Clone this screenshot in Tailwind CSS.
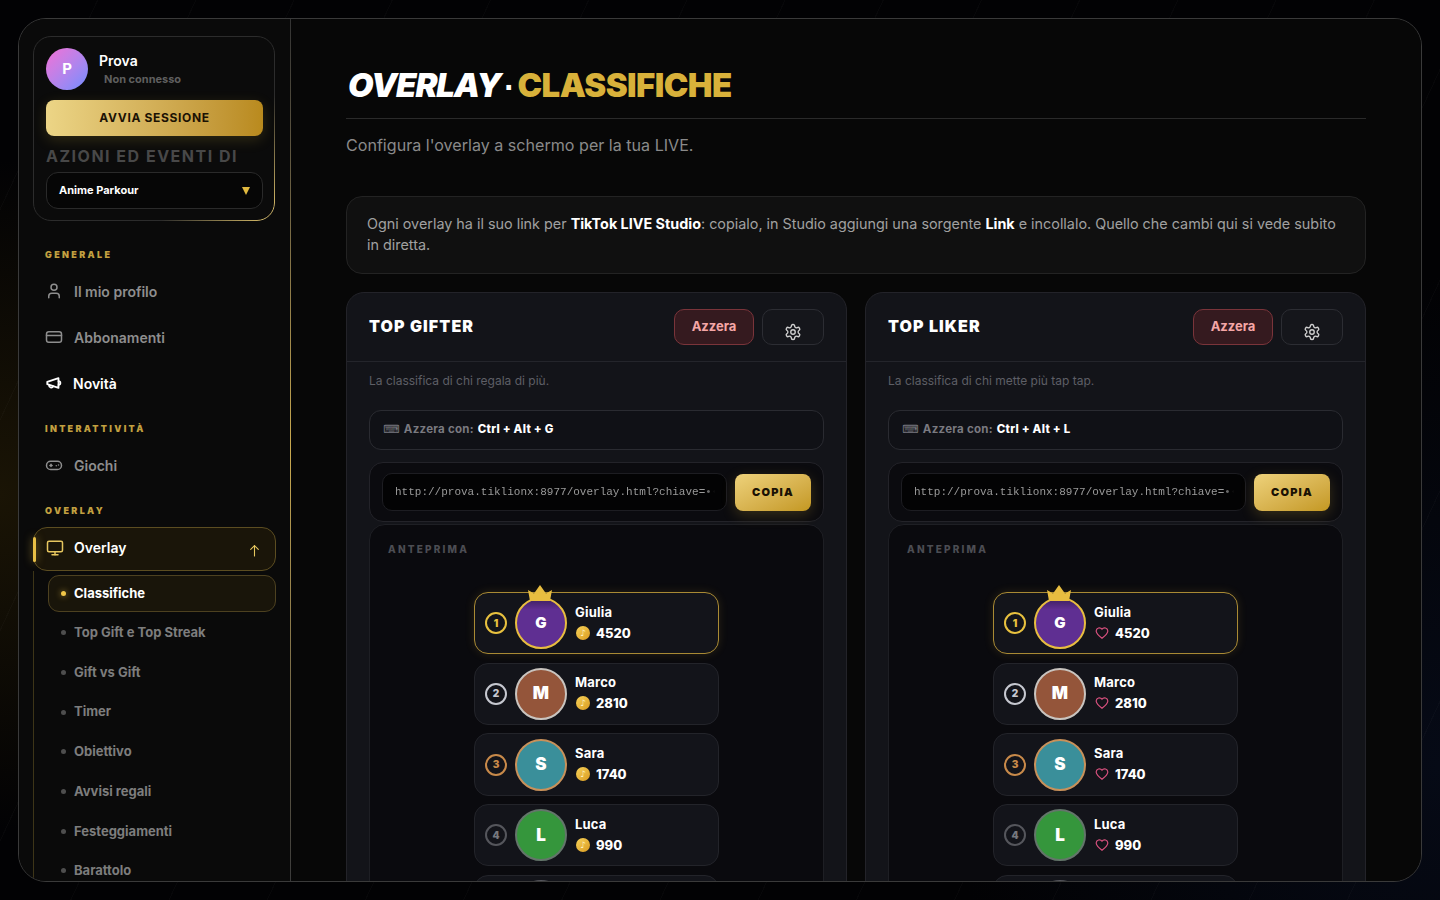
<!DOCTYPE html>
<html lang="it">
  <head>
    <meta charset="UTF-8" />
    <meta name="viewport" content="width=device-width, initial-scale=1.0" />
    <title>Overlay - Classifiche</title>
    <script src="https://cdn.jsdelivr.net/npm/@tailwindcss/browser@4"></script>
  </head>
  <body class="h-screen overflow-hidden bg-[#020204] p-[18px] font-['Inter',sans-serif] text-white bg-[repeating-linear-gradient(115deg,transparent_0_88px,rgba(255,255,255,0.018)_88px_89px),radial-gradient(circle_at_0%_55%,#1a1405_0%,transparent_22%),radial-gradient(circle_at_100%_85%,#060a16_0%,transparent_30%)]">
    <div class="flex h-[864px] w-[1404px] overflow-hidden rounded-[28px] border border-[#3a3a3a] bg-[#080808]">
      <!-- Sidebar -->
      <aside class="relative h-full w-[272px] shrink-0 overflow-hidden bg-[#0a0a0a] pl-[14px] pr-[15px] pt-[17px]">
        <div class="absolute right-0 top-0 h-full w-px bg-gradient-to-b from-[#333] via-[#c9a94f] to-[#3a3a3a]"></div>

        <!-- Account card -->
        <div class="relative h-[185px] w-[242px] rounded-[18px] border border-[#2c2c2c] bg-[#0b0b0b] px-3 pt-[11px]">
          <div class="pointer-events-none absolute -inset-px rounded-[18px] border border-[#d9bd68] [mask-image:linear-gradient(132deg,transparent_72%,black_98%)]"></div>
          <div class="flex h-[42px] items-start gap-[11px]">
            <div class="flex h-[42px] w-[42px] items-center justify-center rounded-full bg-gradient-to-br from-[#f26fd6] to-[#6d8cff] text-[15px] font-bold">P</div>
            <div>
              <div class="mt-[3px] text-[14px] leading-[20px] font-semibold">Prova</div>
              <div class="ml-[5px] mt-[1px] text-[11px] leading-[14px] font-bold text-[#5f5f5f]">Non connesso</div>
            </div>
          </div>
          <button class="mt-[10px] h-[36px] w-[217px] rounded-[8px] bg-gradient-to-r from-[#ecd586] to-[#b98a1d] text-[12px] font-bold tracking-[0.65px] text-[#1c1204] shadow-[0_4px_14px_rgba(212,175,55,0.18)]">AVVIA SESSIONE</button>
          <div class="mt-[10px] whitespace-nowrap text-[16px] leading-[20px] font-bold tracking-[1.5px] text-[#484848]">AZIONI ED EVENTI DI</div>
          <div class="mt-[6px] flex h-[37px] w-[217px] items-center justify-between rounded-[12px] border border-[#2a2a2a] bg-[#060606] pl-3 pr-[12px]">
            <span class="text-[11px] font-bold">Anime Parkour</span>
            <svg class="h-[8px] w-[8px]" viewBox="0 0 8 8" fill="#e0b93f"><path d="M0 0h8L4 8z"/></svg>
          </div>
        </div>

        <!-- Generale -->
        <div class="mt-[28px] pl-3 text-[9px] leading-[12px] font-black tracking-[2.35px] text-[#c2a040]">GENERALE</div>
        <a class="mt-[7px] flex h-[46px] items-center gap-[11px] pl-[12px] text-[14px] font-semibold text-[#8e8e8e]">
          <svg class="h-[18px] w-[18px]" viewBox="0 0 24 24" fill="none" stroke="currentColor" stroke-width="2" stroke-linecap="round" stroke-linejoin="round"><path d="M19 21v-2a4 4 0 0 0-4-4H9a4 4 0 0 0-4 4v2"/><circle cx="12" cy="7" r="4"/></svg>
          Il mio profilo
        </a>
        <a class="flex h-[46px] items-center gap-[11px] pl-[12px] text-[14px] font-semibold text-[#8e8e8e]">
          <svg class="h-[18px] w-[18px]" viewBox="0 0 24 24" fill="none" stroke="currentColor" stroke-width="2" stroke-linecap="round" stroke-linejoin="round"><rect x="2" y="5" width="20" height="14" rx="3"/><path d="M2 10h20"/></svg>
          Abbonamenti
        </a>
        <a class="flex h-[46px] items-center gap-[10px] pl-[12px] text-[14px] font-semibold text-white">
          <svg class="h-[18px] w-[18px]" viewBox="0 0 24 24" fill="none" stroke="currentColor" stroke-width="2.4" stroke-linecap="round" stroke-linejoin="round"><path d="M3 10.5v3l15 5V5.5z"/><path d="M11 16.5a3 3 0 0 1-5.6-1.8"/><path d="M18 9.5a2.5 2.5 0 0 1 0 5"/></svg>
          Novità
        </a>

        <!-- Interattivita -->
        <div class="mt-[17px] pl-3 text-[9px] leading-[12px] font-black tracking-[2.3px] text-[#c2a040]">INTERATTIVITÀ</div>
        <a class="mt-[7px] flex h-[46px] items-center gap-[11px] pl-[12px] text-[14px] font-semibold text-[#8e8e8e]">
          <svg class="h-[18px] w-[18px]" viewBox="0 0 24 24" fill="none" stroke="currentColor" stroke-width="2" stroke-linecap="round" stroke-linejoin="round"><rect x="2" y="7" width="20" height="11" rx="5.5"/><path d="M6.5 12.5h3"/><path d="M8 11v3"/><path d="M15 13h.01"/><path d="M18 12h.01"/></svg>
          Giochi
        </a>

        <!-- Overlay -->
        <div class="mt-[17px] pl-3 text-[9px] leading-[12px] font-black tracking-[2.35px] text-[#c2a040]">OVERLAY</div>
        <div class="relative mt-[10px] flex h-[44px] w-[243px] items-center gap-[10px] rounded-[14px] border border-[#5c4d21] bg-[#1a1509] pb-[3px] pl-[12px] text-[14px] font-semibold text-white">
          <span class="absolute -left-px top-[9px] h-[25px] w-[3px] rounded-full bg-[#e8bf45] shadow-[0_0_8px_rgba(232,191,69,0.6)]"></span>
          <svg class="h-[18px] w-[18px] text-[#e6c65f]" viewBox="0 0 24 24" fill="none" stroke="currentColor" stroke-width="2" stroke-linecap="round" stroke-linejoin="round"><rect x="2" y="3" width="20" height="14" rx="2"/><path d="M8 21h8"/><path d="M12 17v4"/></svg>
          Overlay
          <svg class="absolute right-[14px] top-[16px] h-[13px] w-[13px] text-[#e6c65f]" viewBox="0 0 24 24" fill="none" stroke="currentColor" stroke-width="2" stroke-linecap="round" stroke-linejoin="round"><path d="M12 22V3"/><path d="m5 10 7-7 7 7"/></svg>
        </div>
        <div class="relative ml-0 border-l border-[#3d3518] pl-[14px] pt-[4px]">
          <div class="flex h-[37px] w-[228px] items-center gap-[8px] rounded-[11px] border border-[#4d4120] bg-[#19150a] pl-[12px] text-[13px] font-bold text-white">
            <span class="h-[5px] w-[5px] rounded-full bg-[#f0c648] shadow-[0_0_6px_rgba(240,198,72,0.7)]"></span>Classifiche
          </div>
          <div class="mt-[1px]">
            <a class="flex h-[39.7px] items-center gap-[8px] pl-[13px] text-[13px] font-bold text-[#7d7d7d]"><span class="h-[5px] w-[5px] rounded-full bg-[#4e4e4e]"></span>Top Gift e Top Streak</a>
            <a class="flex h-[39.7px] items-center gap-[8px] pl-[13px] text-[13px] font-bold text-[#7d7d7d]"><span class="h-[5px] w-[5px] rounded-full bg-[#4e4e4e]"></span>Gift vs Gift</a>
            <a class="flex h-[39.7px] items-center gap-[8px] pl-[13px] text-[13px] font-bold text-[#7d7d7d]"><span class="h-[5px] w-[5px] rounded-full bg-[#4e4e4e]"></span>Timer</a>
            <a class="flex h-[39.7px] items-center gap-[8px] pl-[13px] text-[13px] font-bold text-[#7d7d7d]"><span class="h-[5px] w-[5px] rounded-full bg-[#4e4e4e]"></span>Obiettivo</a>
            <a class="flex h-[39.7px] items-center gap-[8px] pl-[13px] text-[13px] font-bold text-[#7d7d7d]"><span class="h-[5px] w-[5px] rounded-full bg-[#4e4e4e]"></span>Avvisi regali</a>
            <a class="flex h-[39.7px] items-center gap-[8px] pl-[13px] text-[13px] font-bold text-[#7d7d7d]"><span class="h-[5px] w-[5px] rounded-full bg-[#4e4e4e]"></span>Festeggiamenti</a>
            <a class="flex h-[39.7px] items-center gap-[8px] pl-[13px] text-[13px] font-bold text-[#7d7d7d]"><span class="h-[5px] w-[5px] rounded-full bg-[#4e4e4e]"></span>Barattolo</a>
          </div>
        </div>
      </aside>

      <!-- Main -->
      <main class="h-full flex-1 overflow-hidden bg-[#070707] pl-[55px] pr-[55px] pt-[47px]">
        <div class="h-[53px] border-b border-[#2a2a2a]">
          <h1 class="flex items-baseline text-[33px] leading-[38px] font-black">
            <span class="ml-[2px] italic tracking-[-1.15px]">OVERLAY</span>
            <span class="ml-[3px] mr-[4px] font-['DejaVu_Sans',sans-serif] text-[26px] text-white">·</span>
            <span class="tracking-[-0.6px] text-[#d8b13a]">CLASSIFICHE</span>
          </h1>
        </div>
        <p class="mt-[14px] text-[16.1px] leading-[24px] text-[#8a8a8a]">Configura l'overlay a schermo per la tua LIVE.</p>

        <div class="mt-[39px] h-[78px] rounded-[16px] border border-[#232323] bg-[#101010] px-[20px] py-[16px] text-[14.37px] leading-[21px] text-[#a0a0a0]">
          Ogni overlay ha il suo link per <b class="font-bold text-white">TikTok LIVE Studio</b>: copialo, in Studio aggiungi una sorgente <b class="font-bold text-white">Link</b> e incollalo. Quello che cambi qui si vede subito in diretta.
        </div>

        <div class="mt-[18px] grid grid-cols-2 gap-[18px]">
          <!-- Top Gifter -->
          <section class="h-[700px] rounded-[18px] border border-[#232329] bg-[#131419]">
            <div class="flex h-[69px] items-center justify-between border-b border-[#24252b] px-[22px]">
              <h2 class="pb-[2px] text-[16px] font-black tracking-[1.1px]">TOP GIFTER</h2>
              <div class="flex gap-[8px]">
                <button class="h-[36px] w-[80px] rounded-[10px] border border-[#7a343a] bg-[#351a1f] text-[13px] font-bold text-[#f4a6a6]">Azzera</button>
                <button class="flex h-[36px] w-[62px] items-end justify-center rounded-[10px] border border-[#2c2d33] bg-[#15161b] pb-[3px] text-[#d0d0d0]">
                  <svg class="h-[18px] w-[18px]" viewBox="0 0 24 24" fill="none" stroke="currentColor" stroke-width="1.8" stroke-linecap="round" stroke-linejoin="round"><path d="M12.22 2h-.44a2 2 0 0 0-2 2v.18a2 2 0 0 1-1 1.73l-.43.25a2 2 0 0 1-2 0l-.15-.08a2 2 0 0 0-2.73.73l-.22.38a2 2 0 0 0 .73 2.73l.15.1a2 2 0 0 1 1 1.72v.51a2 2 0 0 1-1 1.74l-.15.09a2 2 0 0 0-.73 2.73l.22.38a2 2 0 0 0 2.73.73l.15-.08a2 2 0 0 1 2 0l.43.25a2 2 0 0 1 1 1.73V20a2 2 0 0 0 2 2h.44a2 2 0 0 0 2-2v-.18a2 2 0 0 1 1-1.73l.43-.25a2 2 0 0 1 2 0l.15.08a2 2 0 0 0 2.73-.73l.22-.39a2 2 0 0 0-.73-2.73l-.15-.08a2 2 0 0 1-1-1.74v-.5a2 2 0 0 1 1-1.74l.15-.09a2 2 0 0 0 .73-2.73l-.22-.38a2 2 0 0 0-2.73-.73l-.15.08a2 2 0 0 1-2 0l-.43-.25a2 2 0 0 1-1-1.73V4a2 2 0 0 0-2-2z"/><circle cx="12" cy="12" r="3"/></svg>
                </button>
              </div>
            </div>
            <div class="px-[22px] pt-[12px]">
              <p class="text-[12px] leading-[14px] text-[#5e5f66]">La classifica di chi regala di più.</p>
              <div class="mt-[22px] flex h-[40px] items-center gap-[2px] rounded-[12px] border border-[#2a2b31] bg-[#101116] pl-[13px] text-[11.5px] font-bold tracking-[0.25px] text-[#7a7a80]">
                <span class="mr-[2px] font-['DejaVu_Sans',sans-serif]">⌨</span> Azzera con: <span class="ml-[2px] font-extrabold text-white">Ctrl + Alt + G</span>
              </div>
              <div class="mt-[12px] flex h-[60px] items-center gap-[8px] rounded-[14px] border border-[#232329] bg-[#0b0b0f] pl-[12px] pr-[12px]">
                <div class="flex h-[38px] w-[345px] items-center overflow-hidden whitespace-nowrap rounded-[10px] border border-[#1d1d22] bg-[#030304] pl-[12px] font-['Liberation_Mono',monospace] text-[11px] text-[#9a9a9a]">
                  <span class="block w-[320px] overflow-hidden [mask-image:linear-gradient(90deg,black_97%,transparent)]">http://prova.tiklionx:8977/overlay.html?chiave=••••••••</span>
                </div>
                <button class="h-[37px] w-[76px] rounded-[8px] bg-gradient-to-br from-[#eed27a] to-[#c4981f] text-[11px] font-black tracking-[1.2px] text-[#1b1204] shadow-[0_4px_14px_rgba(212,175,55,0.22)]">COPIA</button>
              </div>
              <div class="mt-[2px] h-[500px] rounded-[16px] border border-[#1e1f24] bg-[#0a0a0e] px-[18px] pt-[18px]">
                <div class="text-[10px] leading-[12px] font-extrabold tracking-[2.2px] text-[#4c4d53]">ANTEPRIMA</div>
                <div class="mx-auto mt-[37px] flex w-[245px] flex-col gap-[8.3px]">
                  <div class="relative flex h-[62.4px] shrink-0 items-center rounded-[14px] border border-[#a98a34] bg-[#13141a] pl-[10px] shadow-[0_0_10px_rgba(212,175,55,0.15)]">
                    <span class="flex h-[22px] w-[22px] items-center justify-center rounded-full border-2 border-[#e8c13f] text-[10px] font-black text-[#e8c13f]">1</span>
                    <div class="relative ml-[8px] flex h-[52px] w-[52px] items-center justify-center rounded-full border-2 border-[#e8bd40] bg-[#5f2f92] bg-[linear-gradient(180deg,#3f2062_0%,#5f2f92_22%)] text-[15px] font-black">G
                      <svg class="absolute -top-[14px] left-[11px] h-[16px] w-[24px]" viewBox="0 0 24 16" fill="#e8bd40"><path d="M0 5l6 3.5L12 0l6 8.5L24 5l-2 11H2z"/></svg>
                    </div>
                    <div class="ml-[8px] pb-[2px]">
                      <div class="text-[13px] leading-[18px] font-bold tracking-[0.2px]">Giulia</div>
                      <div class="mt-[3px] flex items-center gap-[6px] text-[13px] leading-[18px] font-extrabold">
                        <span class="ml-px flex h-[14px] w-[14px] items-center justify-center rounded-full bg-gradient-to-br from-[#f7d358] to-[#d99a1c] font-['DejaVu_Sans',sans-serif] text-[9px] font-normal text-[#fff3c4]">♪</span>4520
                      </div>
                    </div>
                  </div>
                  <div class="flex h-[62.4px] shrink-0 items-center rounded-[14px] border border-[#23242a] bg-[#13141a] pl-[10px]">
                    <span class="flex h-[22px] w-[22px] items-center justify-center rounded-full border-2 border-[#c6c8d0] text-[10px] font-black text-[#c6c8d0]">2</span>
                    <div class="ml-[8px] flex h-[52px] w-[52px] items-center justify-center rounded-full border-2 border-[#c9c4bf] bg-[#94553a] text-[17px] font-black">M</div>
                    <div class="ml-[8px] pb-[2px]">
                      <div class="text-[13px] leading-[18px] font-bold tracking-[0.2px]">Marco</div>
                      <div class="mt-[3px] flex items-center gap-[6px] text-[13px] leading-[18px] font-extrabold">
                        <span class="ml-px flex h-[14px] w-[14px] items-center justify-center rounded-full bg-gradient-to-br from-[#f7d358] to-[#d99a1c] font-['DejaVu_Sans',sans-serif] text-[9px] font-normal text-[#fff3c4]">♪</span>2810
                      </div>
                    </div>
                  </div>
                  <div class="flex h-[62.4px] shrink-0 items-center rounded-[14px] border border-[#23242a] bg-[#13141a] pl-[10px]">
                    <span class="flex h-[22px] w-[22px] items-center justify-center rounded-full border-2 border-[#c88a4a] text-[10px] font-black text-[#c88a4a]">3</span>
                    <div class="ml-[8px] flex h-[52px] w-[52px] items-center justify-center rounded-full border-2 border-[#c8915a] bg-[#3a8f9a] text-[17px] font-black">S</div>
                    <div class="ml-[8px] pb-[2px]">
                      <div class="text-[13px] leading-[18px] font-bold tracking-[0.2px]">Sara</div>
                      <div class="mt-[3px] flex items-center gap-[6px] text-[13px] leading-[18px] font-extrabold">
                        <span class="ml-px flex h-[14px] w-[14px] items-center justify-center rounded-full bg-gradient-to-br from-[#f7d358] to-[#d99a1c] font-['DejaVu_Sans',sans-serif] text-[9px] font-normal text-[#fff3c4]">♪</span>1740
                      </div>
                    </div>
                  </div>
                  <div class="flex h-[62.4px] shrink-0 items-center rounded-[14px] border border-[#23242a] bg-[#13141a] pl-[10px]">
                    <span class="flex h-[22px] w-[22px] items-center justify-center rounded-full border-2 border-[#55565c] text-[10px] font-black text-[#77787e]">4</span>
                    <div class="ml-[8px] flex h-[52px] w-[52px] items-center justify-center rounded-full border-2 border-[#63756a] bg-[#35963c] text-[17px] font-black">L</div>
                    <div class="ml-[8px] pb-[2px]">
                      <div class="text-[13px] leading-[18px] font-bold tracking-[0.2px]">Luca</div>
                      <div class="mt-[3px] flex items-center gap-[6px] text-[13px] leading-[18px] font-extrabold">
                        <span class="ml-px flex h-[14px] w-[14px] items-center justify-center rounded-full bg-gradient-to-br from-[#f7d358] to-[#d99a1c] font-['DejaVu_Sans',sans-serif] text-[9px] font-normal text-[#fff3c4]">♪</span>990
                      </div>
                    </div>
                  </div>
                  <div class="flex h-[62.4px] shrink-0 items-center rounded-[14px] border border-[#23242a] bg-[#13141a] pl-[10px]">
                    <span class="ml-[30px] h-[52px] w-[52px] rounded-full border-2 border-[#55565c] bg-[#2c2d35]"></span>
                  </div>
                </div>
              </div>
            </div>
          </section>

          <!-- Top Liker -->
          <section class="h-[700px] rounded-[18px] border border-[#232329] bg-[#131419]">
            <div class="flex h-[69px] items-center justify-between border-b border-[#24252b] px-[22px]">
              <h2 class="pb-[2px] text-[16px] font-black tracking-[1.1px]">TOP LIKER</h2>
              <div class="flex gap-[8px]">
                <button class="h-[36px] w-[80px] rounded-[10px] border border-[#7a343a] bg-[#351a1f] text-[13px] font-bold text-[#f4a6a6]">Azzera</button>
                <button class="flex h-[36px] w-[62px] items-end justify-center rounded-[10px] border border-[#2c2d33] bg-[#15161b] pb-[3px] text-[#d0d0d0]">
                  <svg class="h-[18px] w-[18px]" viewBox="0 0 24 24" fill="none" stroke="currentColor" stroke-width="1.8" stroke-linecap="round" stroke-linejoin="round"><path d="M12.22 2h-.44a2 2 0 0 0-2 2v.18a2 2 0 0 1-1 1.73l-.43.25a2 2 0 0 1-2 0l-.15-.08a2 2 0 0 0-2.73.73l-.22.38a2 2 0 0 0 .73 2.73l.15.1a2 2 0 0 1 1 1.72v.51a2 2 0 0 1-1 1.74l-.15.09a2 2 0 0 0-.73 2.73l.22.38a2 2 0 0 0 2.73.73l.15-.08a2 2 0 0 1 2 0l.43.25a2 2 0 0 1 1 1.73V20a2 2 0 0 0 2 2h.44a2 2 0 0 0 2-2v-.18a2 2 0 0 1 1-1.73l.43-.25a2 2 0 0 1 2 0l.15.08a2 2 0 0 0 2.73-.73l.22-.39a2 2 0 0 0-.73-2.73l-.15-.08a2 2 0 0 1-1-1.74v-.5a2 2 0 0 1 1-1.74l.15-.09a2 2 0 0 0 .73-2.73l-.22-.38a2 2 0 0 0-2.73-.73l-.15.08a2 2 0 0 1-2 0l-.43-.25a2 2 0 0 1-1-1.73V4a2 2 0 0 0-2-2z"/><circle cx="12" cy="12" r="3"/></svg>
                </button>
              </div>
            </div>
            <div class="px-[22px] pt-[12px]">
              <p class="text-[12px] leading-[14px] text-[#5e5f66]">La classifica di chi mette più tap tap.</p>
              <div class="mt-[22px] flex h-[40px] items-center gap-[2px] rounded-[12px] border border-[#2a2b31] bg-[#101116] pl-[13px] text-[11.5px] font-bold tracking-[0.25px] text-[#7a7a80]">
                <span class="mr-[2px] font-['DejaVu_Sans',sans-serif]">⌨</span> Azzera con: <span class="ml-[2px] font-extrabold text-white">Ctrl + Alt + L</span>
              </div>
              <div class="mt-[12px] flex h-[60px] items-center gap-[8px] rounded-[14px] border border-[#232329] bg-[#0b0b0f] pl-[12px] pr-[12px]">
                <div class="flex h-[38px] w-[345px] items-center overflow-hidden whitespace-nowrap rounded-[10px] border border-[#1d1d22] bg-[#030304] pl-[12px] font-['Liberation_Mono',monospace] text-[11px] text-[#9a9a9a]">
                  <span class="block w-[320px] overflow-hidden [mask-image:linear-gradient(90deg,black_97%,transparent)]">http://prova.tiklionx:8977/overlay.html?chiave=••••••••</span>
                </div>
                <button class="h-[37px] w-[76px] rounded-[8px] bg-gradient-to-br from-[#eed27a] to-[#c4981f] text-[11px] font-black tracking-[1.2px] text-[#1b1204] shadow-[0_4px_14px_rgba(212,175,55,0.22)]">COPIA</button>
              </div>
              <div class="mt-[2px] h-[500px] rounded-[16px] border border-[#1e1f24] bg-[#0a0a0e] px-[18px] pt-[18px]">
                <div class="text-[10px] leading-[12px] font-extrabold tracking-[2.2px] text-[#4c4d53]">ANTEPRIMA</div>
                <div class="mx-auto mt-[37px] flex w-[245px] flex-col gap-[8.3px]">
                  <div class="relative flex h-[62.4px] shrink-0 items-center rounded-[14px] border border-[#a98a34] bg-[#13141a] pl-[10px] shadow-[0_0_10px_rgba(212,175,55,0.15)]">
                    <span class="flex h-[22px] w-[22px] items-center justify-center rounded-full border-2 border-[#e8c13f] text-[10px] font-black text-[#e8c13f]">1</span>
                    <div class="relative ml-[8px] flex h-[52px] w-[52px] items-center justify-center rounded-full border-2 border-[#e8bd40] bg-[#5f2f92] bg-[linear-gradient(180deg,#3f2062_0%,#5f2f92_22%)] text-[15px] font-black">G
                      <svg class="absolute -top-[14px] left-[11px] h-[16px] w-[24px]" viewBox="0 0 24 16" fill="#e8bd40"><path d="M0 5l6 3.5L12 0l6 8.5L24 5l-2 11H2z"/></svg>
                    </div>
                    <div class="ml-[8px] pb-[2px]">
                      <div class="text-[13px] leading-[18px] font-bold tracking-[0.2px]">Giulia</div>
                      <div class="mt-[3px] flex items-center gap-[6px] text-[13px] leading-[18px] font-extrabold">
                        <svg class="ml-px h-[14px] w-[14px] text-[#d9517f]" viewBox="0 0 24 24" fill="none" stroke="currentColor" stroke-width="2"><path d="M12 21C5 15.5 2 12 2 8.5A5.5 5.5 0 0 1 12 5.5 5.5 5.5 0 0 1 22 8.5C22 12 19 15.5 12 21z"/></svg>4520
                      </div>
                    </div>
                  </div>
                  <div class="flex h-[62.4px] shrink-0 items-center rounded-[14px] border border-[#23242a] bg-[#13141a] pl-[10px]">
                    <span class="flex h-[22px] w-[22px] items-center justify-center rounded-full border-2 border-[#c6c8d0] text-[10px] font-black text-[#c6c8d0]">2</span>
                    <div class="ml-[8px] flex h-[52px] w-[52px] items-center justify-center rounded-full border-2 border-[#c9c4bf] bg-[#94553a] text-[17px] font-black">M</div>
                    <div class="ml-[8px] pb-[2px]">
                      <div class="text-[13px] leading-[18px] font-bold tracking-[0.2px]">Marco</div>
                      <div class="mt-[3px] flex items-center gap-[6px] text-[13px] leading-[18px] font-extrabold">
                        <svg class="ml-px h-[14px] w-[14px] text-[#d9517f]" viewBox="0 0 24 24" fill="none" stroke="currentColor" stroke-width="2"><path d="M12 21C5 15.5 2 12 2 8.5A5.5 5.5 0 0 1 12 5.5 5.5 5.5 0 0 1 22 8.5C22 12 19 15.5 12 21z"/></svg>2810
                      </div>
                    </div>
                  </div>
                  <div class="flex h-[62.4px] shrink-0 items-center rounded-[14px] border border-[#23242a] bg-[#13141a] pl-[10px]">
                    <span class="flex h-[22px] w-[22px] items-center justify-center rounded-full border-2 border-[#c88a4a] text-[10px] font-black text-[#c88a4a]">3</span>
                    <div class="ml-[8px] flex h-[52px] w-[52px] items-center justify-center rounded-full border-2 border-[#c8915a] bg-[#3a8f9a] text-[17px] font-black">S</div>
                    <div class="ml-[8px] pb-[2px]">
                      <div class="text-[13px] leading-[18px] font-bold tracking-[0.2px]">Sara</div>
                      <div class="mt-[3px] flex items-center gap-[6px] text-[13px] leading-[18px] font-extrabold">
                        <svg class="ml-px h-[14px] w-[14px] text-[#d9517f]" viewBox="0 0 24 24" fill="none" stroke="currentColor" stroke-width="2"><path d="M12 21C5 15.5 2 12 2 8.5A5.5 5.5 0 0 1 12 5.5 5.5 5.5 0 0 1 22 8.5C22 12 19 15.5 12 21z"/></svg>1740
                      </div>
                    </div>
                  </div>
                  <div class="flex h-[62.4px] shrink-0 items-center rounded-[14px] border border-[#23242a] bg-[#13141a] pl-[10px]">
                    <span class="flex h-[22px] w-[22px] items-center justify-center rounded-full border-2 border-[#55565c] text-[10px] font-black text-[#77787e]">4</span>
                    <div class="ml-[8px] flex h-[52px] w-[52px] items-center justify-center rounded-full border-2 border-[#63756a] bg-[#35963c] text-[17px] font-black">L</div>
                    <div class="ml-[8px] pb-[2px]">
                      <div class="text-[13px] leading-[18px] font-bold tracking-[0.2px]">Luca</div>
                      <div class="mt-[3px] flex items-center gap-[6px] text-[13px] leading-[18px] font-extrabold">
                        <svg class="ml-px h-[14px] w-[14px] text-[#d9517f]" viewBox="0 0 24 24" fill="none" stroke="currentColor" stroke-width="2"><path d="M12 21C5 15.5 2 12 2 8.5A5.5 5.5 0 0 1 12 5.5 5.5 5.5 0 0 1 22 8.5C22 12 19 15.5 12 21z"/></svg>990
                      </div>
                    </div>
                  </div>
                  <div class="flex h-[62.4px] shrink-0 items-center rounded-[14px] border border-[#23242a] bg-[#13141a] pl-[10px]">
                    <span class="ml-[30px] h-[52px] w-[52px] rounded-full border-2 border-[#55565c] bg-[#2c2d35]"></span>
                  </div>
                </div>
              </div>
            </div>
          </section>
        </div>
      </main>
    </div>
  </body>
</html>
